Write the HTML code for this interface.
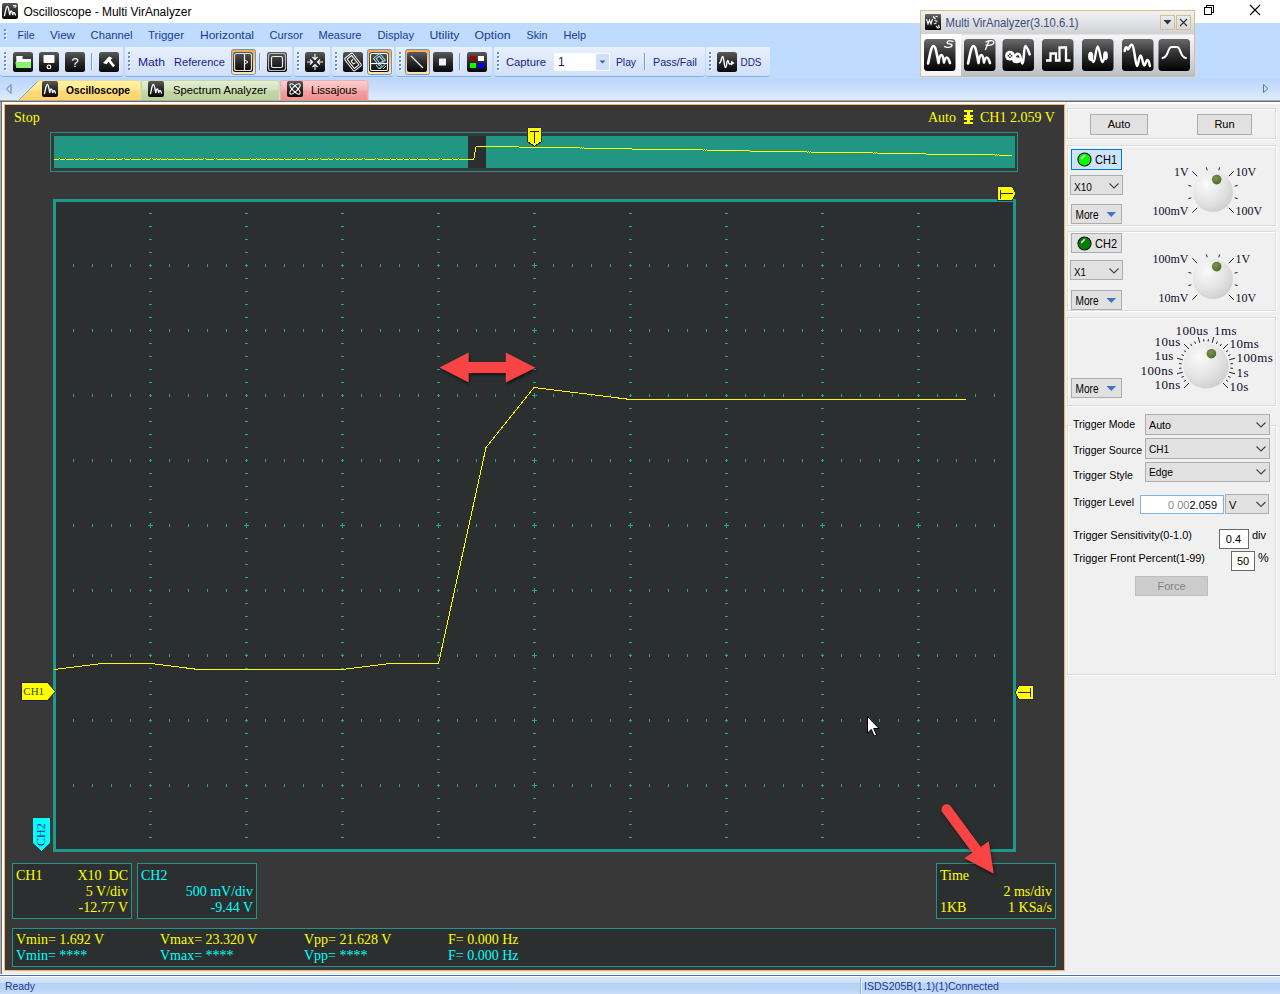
<!DOCTYPE html>
<html><head><meta charset="utf-8"><title>Oscilloscope - Multi VirAnalyzer</title>
<style>
html,body{margin:0;padding:0}
body{width:1280px;height:994px;position:relative;overflow:hidden;background:#fff;font-family:"Liberation Sans",sans-serif;font-size:12px;color:#000}
.a{position:absolute}
svg{position:absolute;left:0;top:0;overflow:visible}
svg text{white-space:pre}
.band{position:absolute;top:47px;height:30px;background:linear-gradient(#e8f0fd,#dce8fb 50%,#cfe0f9);border-bottom:1px solid #84aee3;border-radius:0 0 3px 3px;box-sizing:border-box}
.gb{position:absolute;left:1067px;width:209px;border:1px solid #dcdcdc;box-sizing:border-box;box-shadow:1px 1px 0 #fff, inset 1px 1px 0 #fff}
.btn{position:absolute;box-sizing:border-box;background:#e1e1e1;border:1px solid #adadad;font-size:11px;text-align:center;line-height:19px;color:#000}
/*SECTION-CSS*/
</style></head><body>
<div class="a" style="left:0;top:0;width:1280px;height:23px;background:#fff"></div>
<div class="a" style="left:0;top:23px;width:1280px;height:24px;background:#bfdbff"></div>
<div class="a" style="left:0;top:47px;width:1280px;height:31px;background:#bfdbff"></div>
<div class="a" style="left:0;top:78px;width:1280px;height:22px;background:linear-gradient(#bbd6fb,#cbdffb 50%,#e1ecfc)"></div>
<!-- toolbar bands -->
<div class="band" style="left:0;width:123px"></div>
<div class="band" style="left:125px;width:167px"></div>
<div class="band" style="left:294px;width:36px"></div>
<div class="band" style="left:332px;width:62px"></div>
<div class="band" style="left:396px;width:96px"></div>
<div class="band" style="left:494px;width:211px"></div>
<div class="band" style="left:706px;width:64px"></div>
<!-- tabs -->
<svg width="1280" height="994" viewBox="0 0 1280 994">
<defs>
<linearGradient id="ty" x1="0" y1="0" x2="0" y2="1"><stop offset="0" stop-color="#fff4a3"/><stop offset=".45" stop-color="#ffe88c"/><stop offset=".55" stop-color="#ffd978"/><stop offset="1" stop-color="#ffd36b"/></linearGradient>
<linearGradient id="tg" x1="0" y1="0" x2="0" y2="1"><stop offset="0" stop-color="#e6efd4"/><stop offset=".45" stop-color="#d3e3bb"/><stop offset=".55" stop-color="#c2d8a6"/><stop offset="1" stop-color="#b9d19c"/></linearGradient>
<linearGradient id="tp" x1="0" y1="0" x2="0" y2="1"><stop offset="0" stop-color="#fbd0d0"/><stop offset=".45" stop-color="#f7b4b4"/><stop offset=".55" stop-color="#f3a0a0"/><stop offset="1" stop-color="#ee8f8f"/></linearGradient>
<linearGradient id="ic" x1="0" y1="0" x2="0" y2="1"><stop offset="0" stop-color="#5a5a5a"/><stop offset=".5" stop-color="#2a2a2a"/><stop offset="1" stop-color="#080808"/></linearGradient>
<g id="wv"><rect width="16" height="16" rx="2" fill="url(#ic)"/><path d="M2.5 12.5c1-4 1.5-9 2.8-9s1.700 5 2.500 8.500c.3-2.500.8-4 1.500-4s1 2 1.400 4c.3-1.500.7-2.500 1.300-2.500s1 1 1.500 2.500" stroke="#fff" stroke-width="1.300" fill="none" stroke-linecap="round"/></g>
</defs>
<path d="M18.500 100.500L37.500 81.500Q38.500 80.500 40 80.500H138.500Q140.500 80.500 140.500 82.500V100.500z" fill="url(#ty)" stroke="#e8d9a0" stroke-width="1"/>
<path d="M141.500 100.500V82.500Q141.500 80.500 143.500 80.500H277Q279 80.500 279 82.500V100.500z" fill="url(#tg)" stroke="#c5d6b0" stroke-width="1"/>
<path d="M280.500 100.500V82.500Q280.500 80.500 282.500 80.500H366Q368 80.500 368 82.500V100.500z" fill="url(#tp)" stroke="#e8b0b0" stroke-width="1"/>
<path d="M18.500 100.500L37.500 81.500" stroke="#7da2ce" stroke-width="1" fill="none"/>
<use href="#wv" x="42" y="81"/>
<use href="#wv" x="148" y="81"/>
<g transform="translate(287,81)"><rect width="16" height="16" rx="2" fill="url(#ic)"/><ellipse cx="8" cy="8" rx="6.800" ry="2.400" transform="rotate(45 8 8)" fill="none" stroke="#fff" stroke-width="1.100"/><ellipse cx="8" cy="8" rx="6.800" ry="2.400" transform="rotate(-45 8 8)" fill="none" stroke="#fff" stroke-width="1.100"/></g>
<path d="M11 84.500v9l-4.500-4.500z" fill="none" stroke="#4f7fc0" stroke-width="1"/>
<path d="M1263.500 84.500v8l4.500-4z" fill="none" stroke="#4f7fc0" stroke-width="1"/>
<g font-family="Liberation Sans" font-size="11.3">
<text x="66" y="94" font-weight="bold" fill="#000" textLength="64" lengthAdjust="spacingAndGlyphs">Oscilloscope</text>
<text x="173" y="94" fill="#000" textLength="94" lengthAdjust="spacingAndGlyphs">Spectrum Analyzer</text>
<text x="311" y="94" fill="#000" textLength="46" lengthAdjust="spacingAndGlyphs">Lissajous</text>
</g>
<!-- title -->
<use href="#wv" x="2" y="3"/>
<path d="M13 5.500h3v1.500h-2.500" stroke="#fff" stroke-width="1" fill="none"/>
<text x="23.500" y="16" font-family="Liberation Sans" font-size="12.500" fill="#000" textLength="168" lengthAdjust="spacingAndGlyphs">Oscilloscope - Multi VirAnalyzer</text>
<path d="M1204.500 7.500h7v7h-7zM1206.500 7.500v-2h7v7h-2" stroke="#000" stroke-width="1" fill="none" shape-rendering="crispEdges"/>
<path d="M1250 5l10 10M1260 5l-10 10" stroke="#000" stroke-width="1.100" fill="none"/>
<!-- menu -->
<g font-family="Liberation Sans" font-size="11.3" fill="#1b3a94">
<text x="17.500" y="39" textLength="17" lengthAdjust="spacingAndGlyphs">File</text>
<text x="50" y="39" textLength="25" lengthAdjust="spacingAndGlyphs">View</text>
<text x="90.500" y="39" textLength="42" lengthAdjust="spacingAndGlyphs">Channel</text>
<text x="148" y="39" textLength="36" lengthAdjust="spacingAndGlyphs">Trigger</text>
<text x="200" y="39" textLength="54" lengthAdjust="spacingAndGlyphs">Horizontal</text>
<text x="269.500" y="39" textLength="33.500" lengthAdjust="spacingAndGlyphs">Cursor</text>
<text x="318.500" y="39" textLength="43" lengthAdjust="spacingAndGlyphs">Measure</text>
<text x="377.500" y="39" textLength="36.500" lengthAdjust="spacingAndGlyphs">Display</text>
<text x="429.500" y="39" textLength="30" lengthAdjust="spacingAndGlyphs">Utility</text>
<text x="474.500" y="39" textLength="36" lengthAdjust="spacingAndGlyphs">Option</text>
<text x="526.500" y="39" textLength="21" lengthAdjust="spacingAndGlyphs">Skin</text>
<text x="563.500" y="39" textLength="22.500" lengthAdjust="spacingAndGlyphs">Help</text>
<text x="138" y="66" fill="#1a1a8c" textLength="27" lengthAdjust="spacingAndGlyphs">Math</text>
<text x="174" y="66" fill="#1a1a8c" textLength="51" lengthAdjust="spacingAndGlyphs">Reference</text>
<text x="506" y="66" fill="#1a1a8c" textLength="40" lengthAdjust="spacingAndGlyphs">Capture</text>
<text x="616" y="66" fill="#1a1a8c" textLength="20" lengthAdjust="spacingAndGlyphs">Play</text>
<text x="653" y="66" fill="#1a1a8c" textLength="44" lengthAdjust="spacingAndGlyphs">Pass/Fail</text>
<text x="740.500" y="66" fill="#1a1a8c" textLength="21" lengthAdjust="spacingAndGlyphs">DDS</text>
</g>
<defs>
<g id="ib"><rect width="20" height="20" rx="2.500" fill="url(#ic)"/></g>
<linearGradient id="pr" x1="0" y1="0" x2="0" y2="1"><stop offset="0" stop-color="#f6a94a"/><stop offset=".35" stop-color="#f9c068"/><stop offset="1" stop-color="#fde7b0"/></linearGradient>
<g id="grip" shape-rendering="crispEdges"><path d="M1 1h2v2h-2zM1 5h2v2h-2zM1 9h2v2h-2zM1 13h2v2h-2zM1 17h2v2h-2z" fill="#fff"/><path d="M0 0h2v2h-2zM0 4h2v2h-2zM0 8h2v2h-2zM0 12h2v2h-2zM0 16h2v2h-2z" fill="#5a8fe0"/></g>
</defs>
<!-- menu grip -->
<g shape-rendering="crispEdges"><path d="M5 30h2v2h-2zM5 34h2v2h-2zM5 38h2v2h-2z" fill="#fff"/><path d="M4 29h2v2h-2zM4 33h2v2h-2zM4 37h2v2h-2z" fill="#5a8fe0"/></g>
<use href="#grip" x="4" y="52"/><use href="#grip" x="128" y="52"/><use href="#grip" x="297" y="52"/><use href="#grip" x="335" y="52"/><use href="#grip" x="399" y="52"/><use href="#grip" x="497" y="52"/><use href="#grip" x="709" y="52"/>
<!-- separators -->
<path d="M91.500 53v17M259.500 53v17M459.500 53v17M644.500 53v17" stroke="#6f9de0" stroke-width="1" shape-rendering="crispEdges"/>
<path d="M92.500 53v17M260.500 53v17M460.500 53v17M645.500 53v17" stroke="#eef4fd" stroke-width="1" shape-rendering="crispEdges"/>
<!-- pressed backgrounds -->
<g stroke="#6a93d6" stroke-width="1"><rect x="231.500" y="49.500" width="24" height="25" rx="2" fill="url(#pr)"/><rect x="367.500" y="49.500" width="24" height="25" rx="2" fill="url(#pr)"/><rect x="405.500" y="49.500" width="24" height="25" rx="2" fill="url(#pr)"/></g>
<!-- 1 open -->
<use href="#ib" x="13" y="52"/><path d="M16.300 56h6.300v3h8.400v4h-14.700z" fill="#fff"/><path d="M15.400 62h15.600v6h-14.800z" fill="#86f26e"/>
<!-- 2 save -->
<use href="#ib" x="39" y="52"/><rect x="43.500" y="55" width="11" height="8" rx="1" fill="#fff"/><circle cx="48.900" cy="66.900" r="1.800" fill="none" stroke="#fff" stroke-width="1.200"/>
<!-- 3 help -->
<use href="#ib" x="65" y="52"/><text x="75" y="67" font-family="Liberation Sans" font-size="13" fill="#fff" text-anchor="middle">?</text>
<!-- 4 hammer -->
<use href="#ib" x="99" y="52"/><path d="M103 63l6-6.500 3.500 1.500-2 2 4.500 5.500-2 1.800-4.500-5.500-2 2.500z" fill="#fff"/>
<!-- 5 split -->
<use href="#ib" x="233" y="52"/><rect x="234.500" y="53.500" width="17" height="17" rx="2" fill="none" stroke="#ddd" stroke-width="1.200"/><path d="M244.500 54v16" stroke="#eee" stroke-width="1.200"/><path d="M245 60l3 2-3 2" stroke="#fff" fill="none" stroke-width="1"/>
<!-- 6 square -->
<use href="#ib" x="267" y="52"/><rect x="268.500" y="53.500" width="17" height="17" rx="2.500" fill="none" stroke="#bbb" stroke-width="1.200"/><rect x="271.500" y="56.500" width="11" height="11" rx="1.500" fill="none" stroke="#e8e8e8" stroke-width="1.200"/>
<!-- 7 converge -->
<use href="#ib" x="305" y="52"/><path d="M315 54v5.500M315 70v-5.500M307 62h5.500M323 62h-5.500M312.500 57l2.500 2.500 2.500-2.500M312.500 67l2.500-2.500 2.500 2.500M310 59.500l2.500 2.500-2.500 2.500M320 59.500l-2.500 2.500 2.500 2.500" stroke="#fff" stroke-width="1.100" fill="none"/>
<!-- 8 card -->
<use href="#ib" x="343" y="52"/><g transform="rotate(-38 353 62)" fill="none" stroke="#fff" stroke-width="1"><rect x="348" y="54" width="10" height="16" rx="1.500"/><rect x="350" y="56" width="6" height="12" rx=".5"/><path d="M352 60h2.500M352 64h2.500M352 60v4"/></g>
<!-- 9 card+image -->
<use href="#ib" x="369" y="52" /><rect x="370.500" y="53.500" width="17" height="17" rx="1.500" fill="none" stroke="#fff" stroke-width="1.200"/><path d="M371 63.500h16" stroke="#fff" stroke-width="1.200"/><g transform="rotate(-40 379 59)" fill="none" stroke="#a8e0f0" stroke-width="1"><rect x="375" y="55" width="8" height="9"/><rect x="377" y="57" width="4" height="6"/></g><path d="M376 65l3 4 3-4M380 69l5-4.500M383 69l3-3" stroke="#a8e0f0" stroke-width="1" fill="none"/>
<!-- 10 line -->
<use href="#ib" x="407" y="52"/><path d="M411 56l12 12" stroke="#eee" stroke-width="1.300"/>
<!-- 11 stop -->
<use href="#ib" x="433" y="52"/><rect x="439" y="58.500" width="7" height="7" rx=".5" fill="#f4f4f4"/>
<!-- 12 colours -->
<use href="#ib" x="467" y="52"/><g shape-rendering="crispEdges"><rect x="470" y="56" width="6" height="5" fill="#a00000"/><rect x="478" y="56" width="6" height="5" fill="#fff"/><rect x="470" y="63" width="6" height="5" fill="#0f0"/><rect x="478" y="63" width="6" height="5" fill="#00f"/></g>
<!-- 13 dds -->
<use href="#ib" x="717" y="52"/><path d="M719.500 63c1.500 0 2-6.500 3.200-6.500s1.500 11 2.800 11 1.200-7 2.200-7 .8 3.500 1.800 3.500h1.500" stroke="#fff" stroke-width="1.400" fill="none" stroke-linecap="round"/><path d="M731 60.500l3.500 2.500-3.500 2.500z" fill="#fff"/>
<!-- combo -->
<rect x="554" y="53" width="56" height="18" fill="#fff"/><rect x="596" y="54" width="13" height="16" fill="#cfe0f7"/><path d="M599.500 60.500h6l-3 3z" fill="#3a5ea0"/><text x="558" y="66" font-family="Liberation Sans" font-size="12" fill="#1a1a5c">1</text>

</svg>

<!--MAIN-->
<div class="a" id="frame" style="left:0;top:100px;width:1280px;height:874px;background:#f0f0f0"></div>
<div class="a" style="left:0;top:100px;width:1280px;height:1px;background:#a9a9a6"></div><div class="a" style="left:0;top:101px;width:1280px;height:1px;background:#6b6b68"></div><div class="a" style="left:0;top:102px;width:1px;height:872px;background:#b0aeac"></div><div class="a" style="left:1px;top:102px;width:1px;height:872px;background:#6e6c6a"></div>
<div class="a" style="left:2px;top:102px;width:1278px;height:2px;background:#fff"></div><div class="a" style="left:2px;top:102px;width:1065px;height:871px;background:#fff"></div>
<div class="a" style="left:4px;top:104px;width:1061px;height:867px;background:#ffb060"></div>
<div class="a" id="scope" style="left:5px;top:105px;width:1059px;height:865px;background:#383838"></div>
<svg width="1280" height="994" viewBox="0 0 1280 994" id="scopesvg">
<defs>
<path id="gr" d="M73.5 -1v3M92.5 -1v3M111.5 -1v3M130.5 -1v3M150.5 -1v3M169.5 -1v3M188.5 -1v3M207.5 -1v3M226.5 -1v3M246.5 -1v3M265.5 -1v3M284.5 -1v3M303.5 -1v3M322.5 -1v3M342.5 -1v3M361.5 -1v3M380.5 -1v3M399.5 -1v3M418.5 -1v3M438.5 -1v3M457.5 -1v3M476.5 -1v3M495.5 -1v3M514.5 -1v3M534.5 -1v3M553.5 -1v3M572.5 -1v3M591.5 -1v3M610.5 -1v3M630.5 -1v3M649.5 -1v3M668.5 -1v3M687.5 -1v3M706.5 -1v3M726.5 -1v3M745.5 -1v3M764.5 -1v3M783.5 -1v3M802.5 -1v3M822.5 -1v3M841.5 -1v3M860.5 -1v3M879.5 -1v3M898.5 -1v3M918.5 -1v3M937.5 -1v3M956.5 -1v3M975.5 -1v3M994.5 -1v3" stroke="#22a885" stroke-width="1" fill="none" shape-rendering="crispEdges"/>
<path id="gc" d="M-1 13.5h3M-1 26.5h3M-1 39.5h3M-1 52.5h3M-1 65.5h3M-1 78.5h3M-1 91.5h3M-1 104.5h3M-1 117.5h3M-1 130.5h3M-1 143.5h3M-1 156.5h3M-1 169.5h3M-1 182.5h3M-1 195.5h3M-1 208.5h3M-1 221.5h3M-1 234.5h3M-1 247.5h3M-1 260.5h3M-1 273.5h3M-1 286.5h3M-1 299.5h3M-1 312.5h3M-1 325.5h3M-1 338.5h3M-1 351.5h3M-1 364.5h3M-1 377.5h3M-1 390.5h3M-1 403.5h3M-1 416.5h3M-1 429.5h3M-1 442.5h3M-1 455.5h3M-1 468.5h3M-1 481.5h3M-1 494.5h3M-1 507.5h3M-1 520.5h3M-1 533.5h3M-1 546.5h3M-1 559.5h3M-1 572.5h3M-1 585.5h3M-1 598.5h3M-1 611.5h3M-1 624.5h3M-1 637.5h3" stroke="#22a885" stroke-width="1" fill="none" shape-rendering="crispEdges"/>
</defs>
<!-- overview -->
<rect x="50.5" y="132.5" width="967" height="39" fill="none" stroke="#1f9686" shape-rendering="crispEdges"/>
<rect x="54" y="136" width="961" height="32" fill="#219683"/>
<rect x="468" y="136" width="18" height="32" fill="#2b2f30"/>
<path d="M54 159.5H59m0 -1h1m0 1M60 159.5H65m0 -1h1m0 1M66 159.5H74m0 -1h1m0 1M75 159.5H79m0 -1h1m0 1M80 159.5H88m0 -1h1m0 1M89 159.5H94m0 -1h1m0 1m1 0m0 -1h1m0 1M97 159.5H105m0 -1h1m0 1M106 159.5H116m0 -1h1m0 1M117 159.5H122m0 -1h1m0 1m1 0m0 -1h1m0 1M125 159.5H130m0 -1h1m0 1M131 159.5H141m0 -1h1m0 1M142 159.5H145m0 -1h1m0 1M146 159.5H150m0 -1h1m0 1m1 0m0 -1h1m0 1M153 159.5H156m0 -1h1m0 1M157 159.5H160m0 -1h1m0 1M161 159.5H167m0 -1h1m0 1M168 159.5H175m0 -1h1m0 1M176 159.5H183m0 -1h1m0 1M184 159.5H192m0 -1h1m0 1M193 159.5H198m0 -1h1m0 1M199 159.5H203m0 -1h1m0 1m1 0m0 -1h1m0 1M206 159.5H214m0 -1h1m0 1m1 0m0 -1h1m0 1M217 159.5H224m0 -1h1m0 1M225 159.5H231m0 -1h1m0 1M232 159.5H239m0 -1h1m0 1M240 159.5H250m0 -1h1m0 1M251 159.5H256m0 -1h1m0 1M257 159.5H260m0 -1h1m0 1M261 159.5H266m0 -1h1m0 1M267 159.5H273m0 -1h1m0 1M274 159.5H278m0 -1h1m0 1M279 159.5H284m0 -1h1m0 1M285 159.5H291m0 -1h1m0 1M292 159.5H296m0 -1h1m0 1M297 159.5H305m0 -1h1m0 1m1 0m0 -1h1m0 1M308 159.5H312m0 -1h1m0 1M313 159.5H318m0 -1h1m0 1m1 0m0 -1h1m0 1M321 159.5H328m0 -1h1m0 1M329 159.5H333m0 -1h1m0 1m1 0m0 -1h1m0 1M336 159.5H339m0 -1h1m0 1M340 159.5H346m0 -1h1m0 1M347 159.5H353m0 -1h1m0 1M354 159.5H357m0 -1h1m0 1M358 159.5H362m0 -1h1m0 1m1 0m0 -1h1m0 1M365 159.5H375m0 -1h1m0 1m1 0m0 -1h1m0 1M378 159.5H383m0 -1h1m0 1M384 159.5H390m0 -1h1m0 1M391 159.5H396m0 -1h1m0 1M397 159.5H403m0 -1h1m0 1M404 159.5H409m0 -1h1m0 1M410 159.5H417m0 -1h1m0 1M418 159.5H428m0 -1h1m0 1M429 159.5H439m0 -1h1m0 1m1 0m0 -1h1m0 1M442 159.5H452m0 -1h1m0 1M453 159.5H458m0 -1h1m0 1M459 159.5H466H473L474.5 157L475.5 148L476.5 146.5H486H519M519 147.5H579M579 148.5m0 -1h1m0 1h1m0 -1h1m0 1h1m0 -1h1m0 1H632M632 149.5H702M702 150.5m0 -1h1m0 1h1m0 -1h1m0 1h1m0 -1h1m0 1H750M750 151.5H806M806 152.5m0 -1h1m0 1h1m0 -1h1m0 1h1m0 -1h1m0 1H872M872 153.5m0 -1h1m0 1h1m0 -1h1m0 1h1m0 -1h1m0 1H926M926 154.5H994M994 155.5m0 -1h1m0 1h1m0 -1h1m0 1h1m0 -1h1m0 1H1012" stroke="#ff0" stroke-width="1" fill="none" shape-rendering="crispEdges"/>
<!-- plot -->
<rect x="54.5" y="200.5" width="960" height="650" fill="#2b2f30" stroke="#1f9a88" stroke-width="3" shape-rendering="crispEdges"/>
<g id="grid">
<use href="#gr" y="265"/><use href="#gr" y="330"/><use href="#gr" y="395"/><use href="#gr" y="460"/><use href="#gr" y="525"/><use href="#gr" y="590"/><use href="#gr" y="655"/><use href="#gr" y="720"/><use href="#gr" y="785"/><use href="#gc" x="150" y="200"/><use href="#gc" x="246" y="200"/><use href="#gc" x="342" y="200"/><use href="#gc" x="438" y="200"/><use href="#gc" x="534" y="200"/><use href="#gc" x="630" y="200"/><use href="#gc" x="726" y="200"/><use href="#gc" x="822" y="200"/><use href="#gc" x="918" y="200"/><path d="M148 525.5h5M150.5 523v5M532 265.5h5M534.5 263v5M244 525.5h5M246.5 523v5M532 330.5h5M534.5 328v5M340 525.5h5M342.5 523v5M532 395.5h5M534.5 393v5M436 525.5h5M438.5 523v5M532 460.5h5M534.5 458v5M532 525.5h5M534.5 523v5M532 525.5h5M534.5 523v5M628 525.5h5M630.5 523v5M532 590.5h5M534.5 588v5M724 525.5h5M726.5 523v5M532 655.5h5M534.5 653v5M820 525.5h5M822.5 523v5M532 720.5h5M534.5 718v5M916 525.5h5M918.5 523v5M532 785.5h5M534.5 783v5" stroke="#22a885" fill="none" shape-rendering="crispEdges"/>
</g>
<polyline points="54.5,669.5 102.5,663.5 150.5,663.5 198.5,669.5 246.5,669.5 294.5,669.5 342.5,669.5 390.5,663.5 438.5,663.5 486.0,447.5 534.0,387.5 582.5,393.5 630.5,399.5 965.5,399.5" stroke="#ff0" stroke-width="1" fill="none" shape-rendering="crispEdges"/>

<g stroke="#2a2a52" stroke-width="1" shape-rendering="crispEdges">
<polygon points="527.5,127.5 541.5,127.5 541.5,141.5 534.5,146.5 527.5,141.5" fill="#ff0"/>
<path d="M530 131.5h9M534.5 131v12" fill="none" stroke="#222"/>
<polygon points="997.5,186.5 1012.5,186.5 1015.5,193.5 1012.5,200.5 997.5,200.5" fill="#ff0"/>
<path d="M1000.5 190v9M1000 193.5h13" fill="none"/>
<polygon points="1015.5,692.5 1018.5,685.5 1033.5,685.5 1033.5,699.5 1018.5,699.5" fill="#ff0"/>
<path d="M1030.5 688v9M1018 692.5h13" fill="none"/>
</g>
<polygon points="21.5,682.5 47.5,682.5 55.5,691.5 47.5,700.5 21.5,700.5" fill="#ff0" stroke="#1c1c50"/>
<text x="23.3" y="695" font-family="Liberation Serif" font-size="11" fill="#3a4a20">CH1</text>
<polygon points="32.5,817.5 50.5,817.5 50.5,843 41.5,851.5 32.5,843" fill="#0ff" stroke="#3a3030" stroke-width="1"/>
<text transform="translate(44.8,846) rotate(-90)" font-family="Liberation Serif" font-size="12" fill="#2030a0" stroke="none">CH2</text>


<g fill="#2b2f30" stroke="#1f9686" shape-rendering="crispEdges">
<rect x="12.5" y="863.5" width="119" height="55"/>
<rect x="137.5" y="863.5" width="119" height="55"/>
<rect x="936.5" y="863.5" width="119" height="55"/>
<rect x="12.5" y="928.5" width="1043" height="38"/>
</g>
<g font-family="Liberation Serif" font-size="14" fill="#ff0">
<text x="14" y="122">Stop</text>
<text x="928" y="122">Auto</text>
<text x="980" y="122">CH1 2.059 V</text>
<text x="16" y="880">CH1</text>
<text x="128" y="880" text-anchor="end">X10  DC</text>
<text x="128" y="896" text-anchor="end">5 V/div</text>
<text x="128" y="912" text-anchor="end">-12.77 V</text>
<text x="940" y="880">Time</text>
<text x="1052" y="896" text-anchor="end">2 ms/div</text>
<text x="940" y="912">1KB</text>
<text x="1052" y="912" text-anchor="end">1 KSa/s</text>
<text x="16" y="943.6">Vmin= 1.692 V</text>
<text x="160" y="943.6">Vmax= 23.320 V</text>
<text x="304" y="943.6">Vpp= 21.628 V</text>
<text x="448" y="943.6">F= 0.000 Hz</text>
</g>
<g font-family="Liberation Serif" font-size="14" fill="#0ff">
<text x="141" y="880">CH2</text>
<text x="253" y="896" text-anchor="end">500 mV/div</text>
<text x="253" y="912" text-anchor="end">-9.44 V</text>
<text x="16" y="959.6">Vmin= ****</text>
<text x="160" y="959.6">Vmax= ****</text>
<text x="304" y="959.6">Vpp= ****</text>
<text x="448" y="959.6">F= 0.000 Hz</text>
</g>
<path d="M964 110h9v2h-9zM964 115h9v2h-9zM964 118h9v2h-9zM964 122h9v2h-9zM967 110h3v14h-3zM966 116h5v3h-5z" fill="#ff0" shape-rendering="crispEdges"/>


<g fill="#f84444" filter="drop-shadow(1px 2px 1.5px rgba(0,0,0,.55))">
<polygon points="439.5,367.5 468.7,352.5 468.7,362 505.8,362 505.8,352.5 535.5,367.7 505.8,382.5 505.8,373 468.7,373 468.7,382.5"/>
<path d="M946.7 809.5L977 850.5" stroke="#f84444" stroke-width="10.5" stroke-linecap="round" fill="none"/>
<polygon points="993.8,873.7 988.8,841.2 964.4,858.3"/>
</g>
<path d="M867.5 716.5v16.5l3.8-3.6 2.9 6.6 2.4-1 -2.9-6.5h5.3z" fill="#fff" stroke="#000" stroke-width="1" stroke-linejoin="miter"/>

</svg>

<div class="a" style="left:1065px;top:104px;width:215px;height:870px;background:#f0f0f0"></div>
<div class="a" style="left:1065px;top:102px;width:2px;height:871px;background:#eef1f8"></div>
<div class="gb" style="top:108px;height:31px"></div>
<div class="gb" style="top:145px;height:81px"></div>
<div class="gb" style="top:231px;height:80px"></div>
<div class="gb" style="top:317px;height:89px"></div>
<div class="gb" style="top:425px;height:250px"></div>
<div class="a" style="left:1071px;top:419px;width:76px;height:13px;background:#f0f0f0"></div><div class="btn" style="left:1090px;top:114px;width:58px;height:21px">Auto</div>
<div class="btn" style="left:1197px;top:114px;width:55px;height:21px">Run</div>
<div class="btn" style="left:1071px;top:149px;width:51px;height:21px;background:#cce4f7;border-color:#0078d7"></div>
<div class="btn" style="left:1071px;top:233px;width:51px;height:20px"></div>
<div class="btn" style="left:1070px;top:175px;width:53px;height:20px"></div>
<div class="btn" style="left:1070px;top:260px;width:53px;height:20px"></div>
<div class="btn" style="left:1071px;top:204px;width:51px;height:20px"></div>
<div class="btn" style="left:1071px;top:290px;width:51px;height:20px"></div>
<div class="btn" style="left:1071px;top:378px;width:51px;height:20px"></div>
<div class="btn" style="left:1145px;top:414px;width:125px;height:21px"></div>
<div class="btn" style="left:1145px;top:438px;width:125px;height:21px"></div>
<div class="btn" style="left:1145px;top:462px;width:125px;height:20px"></div>
<div class="btn" style="left:1225px;top:494px;width:44px;height:20px"></div>
<div class="a" style="left:1140px;top:495px;width:84px;height:19px;background:#fff;border:1px solid #7eb4ea;box-sizing:border-box"></div>
<div class="a" style="left:1219px;top:529px;width:30px;height:20px;background:#fff;border:1px solid #6a6a6a;box-sizing:border-box"></div>
<div class="a" style="left:1231px;top:551px;width:24px;height:20px;background:#fff;border:1px solid #6a6a6a;box-sizing:border-box"></div>
<div class="btn" style="left:1135px;top:576px;width:73px;height:20px;background:#ccc;border-color:#bfbfbf;color:#838383">Force</div>
<svg width="1280" height="994" viewBox="0 0 1280 994">
<defs>
<radialGradient id="kg" cx=".35" cy=".3" r=".9"><stop offset="0" stop-color="#fafafa"/><stop offset=".5" stop-color="#e4e4e4"/><stop offset="1" stop-color="#c4c4c4"/></radialGradient>
<radialGradient id="kd" cx=".4" cy=".35" r=".7"><stop offset="0" stop-color="#7a9448"/><stop offset="1" stop-color="#4d6a28"/></radialGradient>
<radialGradient id="lg" cx=".4" cy=".35" r=".7"><stop offset="0" stop-color="#6aff6a"/><stop offset="1" stop-color="#00e800"/></radialGradient>
</defs>
<circle cx="1213" cy="192" r="20" fill="url(#kg)"/><circle cx="1216.7" cy="179.6" r="4.8" fill="url(#kd)"/><path d="M1197.2 207.8L1192.3 212.7M1197.2 176.2L1192.3 171.3M1228.8 176.2L1233.7 171.3M1228.8 207.8L1233.7 212.7M1191.3 197.8L1188.4 198.6M1191.3 186.2L1188.4 185.4M1207.2 170.3L1206.4 167.4M1218.8 170.3L1219.6 167.4M1234.7 186.2L1237.6 185.4M1234.7 197.8L1237.6 198.6" stroke="#222" stroke-width="1" fill="none"/><circle cx="1213" cy="279" r="20" fill="url(#kg)"/><circle cx="1216.7" cy="266.6" r="4.8" fill="url(#kd)"/><path d="M1197.2 294.8L1192.3 299.7M1197.2 263.2L1192.3 258.3M1228.8 263.2L1233.7 258.3M1228.8 294.8L1233.7 299.7M1191.3 284.8L1188.4 285.6M1191.3 273.2L1188.4 272.4M1207.2 257.3L1206.4 254.4M1218.8 257.3L1219.6 254.4M1234.7 273.2L1237.6 272.4M1234.7 284.8L1237.6 285.6" stroke="#222" stroke-width="1" fill="none"/><circle cx="1206" cy="366" r="22.5" fill="url(#kg)"/><circle cx="1211.4" cy="353.7" r="4.8" fill="url(#kd)"/><path d="M1189.0 383.0L1184.1 387.9M1185.9 380.1L1183.9 381.5M1183.8 376.4L1181.5 377.4M1182.8 372.2L1177.0 373.8M1181.6 368.1L1179.1 368.4M1181.6 363.9L1179.1 363.6M1182.8 359.8L1177.0 358.2M1183.8 355.6L1181.5 354.6M1185.9 351.9L1183.9 350.5M1189.0 349.0L1184.1 344.1M1191.9 345.9L1190.5 343.9M1195.6 343.8L1194.6 341.5M1199.8 342.8L1198.2 337.0M1203.9 341.6L1203.6 339.1M1208.1 341.6L1208.4 339.1M1212.2 342.8L1213.8 337.0M1216.4 343.8L1217.4 341.5M1220.1 345.9L1221.5 343.9M1223.0 349.0L1227.9 344.1M1226.1 351.9L1228.1 350.5M1228.2 355.6L1230.5 354.6M1229.2 359.8L1235.0 358.2M1230.4 363.9L1232.9 363.6M1230.4 368.1L1232.9 368.4M1229.2 372.2L1235.0 373.8M1228.2 376.4L1230.5 377.4M1226.1 380.1L1228.1 381.5M1223.0 383.0L1227.9 387.9" stroke="#222" stroke-width="1" fill="none"/>
<circle cx="1084.500" cy="159.500" r="6.500" fill="#0f0" stroke="#111" stroke-width="1.200"/><path d="M1081.500 158.500l3-3" stroke="#fff" stroke-width="1.400" stroke-linecap="round"/>
<circle cx="1084.500" cy="243.500" r="6.500" fill="#008000" stroke="#111" stroke-width="1.200"/><path d="M1081.500 242.500l3-3" stroke="#fff" stroke-width="1.400" stroke-linecap="round"/>
<g fill="none" stroke="#444" stroke-width="1.100"><path d="M1109.500 183.500l4.500 4.500 4.500-4.500M1109.500 268.500l4.500 4.500 4.500-4.500M1256.500 422.500l4.500 4.500 4.500-4.500M1256.500 446.500l4.500 4.500 4.500-4.500M1256.500 469.500l4.500 4.500 4.500-4.500M1256.500 502l4.500 4.500 4.500-4.500"/></g>
<g fill="#4472c4"><path d="M1106.500 212h9.500l-4.750 5z"/><path d="M1106.500 298h9.500l-4.750 5z"/><path d="M1106.500 386h9.500l-4.750 5z"/></g>
<g font-family="Liberation Serif" font-size="12" fill="#0c0c28">
<text x="1174" y="176">1V</text><text x="1235.500" y="176">10V</text><text x="1152.500" y="214.500">100mV</text><text x="1235.500" y="214.500">100V</text>
<text x="1152.500" y="262.500">100mV</text><text x="1235.500" y="262.500">1V</text><text x="1158.500" y="301.500">10mV</text><text x="1235.500" y="301.500">10V</text>
<g font-size="13" letter-spacing=".4"><text x="1175.500" y="334.500">100us</text><text x="1214" y="334.500">1ms</text>
<text x="1154.500" y="346">10us</text><text x="1229.500" y="347.500">10ms</text>
<text x="1154.500" y="360">1us</text><text x="1236.500" y="362">100ms</text>
<text x="1140.500" y="374.500">100ns</text><text x="1236.500" y="376.500">1s</text>
<text x="1154.500" y="388.500">10ns</text><text x="1229.500" y="390.500">10s</text></g>
</g>
<g font-family="Liberation Sans" font-size="11" fill="#000">
<text x="1095" y="164" font-size="12" textLength="22" lengthAdjust="spacingAndGlyphs">CH1</text>
<text x="1095" y="248" font-size="12" textLength="22" lengthAdjust="spacingAndGlyphs">CH2</text>
<text x="1074" y="190.500" textLength="18" lengthAdjust="spacingAndGlyphs">X10</text>
<text x="1074" y="275.500" textLength="12" lengthAdjust="spacingAndGlyphs">X1</text>
<text x="1075.500" y="219" font-size="12" textLength="23" lengthAdjust="spacingAndGlyphs">More</text>
<text x="1075.500" y="305" font-size="12" textLength="23" lengthAdjust="spacingAndGlyphs">More</text>
<text x="1075.500" y="393" font-size="12" textLength="23" lengthAdjust="spacingAndGlyphs">More</text>
<text x="1073" y="427.500" textLength="62" lengthAdjust="spacingAndGlyphs">Trigger Mode</text>
<text x="1073" y="453.500" textLength="69" lengthAdjust="spacingAndGlyphs">Trigger Source</text>
<text x="1073" y="478.500" textLength="60" lengthAdjust="spacingAndGlyphs">Trigger Style</text>
<text x="1073" y="506" textLength="61" lengthAdjust="spacingAndGlyphs">Trigger Level</text>
<text x="1073" y="539" textLength="119" lengthAdjust="spacingAndGlyphs">Trigger Sensitivity(0-1.0)</text>
<text x="1073" y="561.500" textLength="132" lengthAdjust="spacingAndGlyphs">Trigger Front Percent(1-99)</text>
<text x="1149" y="428.500" textLength="22" lengthAdjust="spacingAndGlyphs">Auto</text>
<text x="1149" y="453" textLength="20" lengthAdjust="spacingAndGlyphs">CH1</text>
<text x="1149" y="476" textLength="24" lengthAdjust="spacingAndGlyphs">Edge</text>
<text x="1229" y="509">V</text>
<text x="1252" y="538.500">div</text>
<text x="1258" y="561.500" font-size="12">%</text>
<text x="1217" y="508.500" text-anchor="end"><tspan fill="#8a8a8a">0 00</tspan>2.059</text>
<text x="1233.500" y="543" text-anchor="middle">0.4</text>
<text x="1243" y="565" text-anchor="middle">50</text>
</g>
</svg>


<div class="a" style="left:0;top:971px;width:1280px;height:3px;background:#eceef4"></div>
<div class="a" style="left:0;top:102px;width:1px;height:872px;background:#b0aeac"></div><div class="a" style="left:1px;top:102px;width:1px;height:872px;background:#6e6c6a"></div>
<div class="a" style="left:0;top:974px;width:1280px;height:1px;background:#fff"></div>
<div class="a" style="left:0;top:975px;width:1280px;height:1px;background:#4a6fae"></div>
<div class="a" style="left:0;top:976px;width:1280px;height:1px;background:#fff"></div>
<div class="a" style="left:0;top:977px;width:1280px;height:17px;background:linear-gradient(#d8e6fa 0,#cfe0f9 6px,#b5d1f6 6px,#bbd5f7 12px,#c6dcf8 17px)"></div>
<div class="a" style="left:860px;top:978px;width:1px;height:16px;background:#8db2e3"></div>
<div class="a" style="left:861px;top:978px;width:1px;height:16px;background:#e8f0fc"></div>
<svg width="1280" height="994" viewBox="0 0 1280 994"><g font-family="Liberation Sans" font-size="11.3" fill="#1b3a94">
<text x="5" y="990" textLength="30" lengthAdjust="spacingAndGlyphs">Ready</text>
<text x="864" y="990" textLength="135" lengthAdjust="spacingAndGlyphs">ISDS205B(1.1)(1)Connected</text>
</g></svg>

<div class="a" style="left:920px;top:10px;width:275px;height:67px;box-sizing:border-box;border:1px solid #d9bd8b;background:linear-gradient(#f0f1f3 0,#e6e7ea 8px,#cfd1d6 23px,#f6f6f8 24px,#e2e3e7 40px,#bcbec5 65px)"></div>
<div class="a" style="left:921px;top:34px;width:40px;height:42px;background:linear-gradient(#fff,#fdfdfd 70%,#f0f0f2)"></div>
<svg width="1280" height="994" viewBox="0 0 1280 994">
<defs>
<linearGradient id="ic2" x1="0" y1="0" x2="0" y2="1"><stop offset="0" stop-color="#6a6a6a"/><stop offset=".45" stop-color="#333"/><stop offset="1" stop-color="#000"/></linearGradient>
<g id="fb"><rect width="31.500" height="32" rx="3.500" fill="url(#ic2)"/></g>
</defs>
<rect x="925" y="14" width="16" height="16" rx="1" fill="url(#ic2)"/>
<path d="M926.500 19l1.500 5 1.500-4 1.500 4 1.500-5M933 16.500l2.500 2.500M935.500 16.500l2 0M934.500 20.500l3 1M934 24l2.500-1M936 26l2.500 2.500M938.500 25l1 3" stroke="#fff" stroke-width="1.100" fill="none"/>
<text x="945.500" y="27" font-family="Liberation Sans" font-size="12" fill="#3b4d78" textLength="133" lengthAdjust="spacingAndGlyphs">Multi VirAnalyzer(3.10.6.1)</text>
<rect x="1160.500" y="15.500" width="14" height="14" fill="none" stroke="#d9bd8b"/><path d="M1163.500 20h8l-4 4.500z" fill="#333"/>
<rect x="1176.500" y="15.500" width="14" height="14" fill="none" stroke="#d9bd8b"/><path d="M1180 19l7 7M1187 19l-7 7" stroke="#333" stroke-width="1.200"/>
<use href="#fb" x="924" y="39"/><use href="#fb" x="964" y="39"/><use href="#fb" x="1002.500" y="39"/><use href="#fb" x="1042" y="39"/><use href="#fb" x="1082" y="39"/><use href="#fb" x="1122" y="39"/><use href="#fb" x="1158.500" y="39"/>
<g stroke="#fff" fill="none" stroke-linecap="round" stroke-linejoin="round">
<!-- 1 S -->
<path d="M928 63.500c1.500-6 3-17.500 5.500-17.500s3.500 10 5 17c.5-4 1.500-8 3-8s2 4 2.500 7.500c.5-2.500 1.500-5 2.800-5s2.200 2.500 3.200 5.500" stroke-width="2.600"/>
<path d="M953 41.500c-2.500-1.200-6-.6-6 1.200s5.500 .6 5 2.800-5 2.400-7.500 1.200" stroke-width="1.300"/>
<!-- 2 P -->
<path d="M968 63.500c1.500-6 3-17.500 5.500-17.500s3.500 10 5 17c.5-4 1.500-8 3-8s2 4 2.500 7.500c.5-2.500 1.500-5 2.800-5s2.200 2.500 3.200 5.500" stroke-width="2.600"/>
<path d="M985.500 49.500l3.500-8.500M986 42c3-1.800 8-1.800 8 .4s-4.500 3.600-8 2.600" stroke-width="1.300"/>
<!-- 3 -->
<circle cx="1010" cy="55.700" r="4.900" fill="#fff" stroke="none"/><ellipse cx="1016.500" cy="60.300" rx="4.200" ry="3" fill="#fff" stroke="none"/>
<path d="M1014 58.500c1-3.500 2.500-4.800 4-4.800s2.400 2 2.900 5 1 4.700 1.800 4.700c1.300 0 1-17.300 2.600-17.300s3 4.500 4.400 8.300" stroke-width="2.500"/>
<path d="M1010 53.300v4.800M1007.600 55.700h4.800" stroke="#333" stroke-width="1.500" stroke-linecap="butt" stroke-dasharray="1.600 1.600"/>
<!-- 4 square wave -->
<path d="M1046 60.500h4.500v-7h5.500v7h3.500v-13h6.500v13h4.500" stroke-width="2.300" stroke-linejoin="miter" stroke-linecap="butt"/>
<!-- 5 modulated -->
<ellipse cx="1090.700" cy="56.300" rx="2.600" ry="4.600" fill="#fff" stroke="none"/><ellipse cx="1105.500" cy="55.700" rx="2.400" ry="4.400" fill="#fff" stroke="none"/>
<path d="M1091 58c1 2 1.800 4 2.600 4 1.600 0 2.400-15.500 4.100-15.500s3 15.500 4.700 15.500c.9 0 1.600-3 2.600-6" stroke-width="2.300"/>
<!-- 6 -->
<path d="M1124.600 51c.3-2 1-3.700 1.800-3.700s1 2.100 1.600 2.100c1 0 1.700-4.600 3.700-4.600 2.600 0 3.800 21.200 5.300 21.200s1.800-10.600 3.500-10.600 2.300 10 3.700 10 1.700-5.400 3.200-5.400 1.800 3 2.500 6" stroke-width="2.500"/>
<!-- 7 bell -->
<path d="M1162.500 58c6 0 5-11 9-11h5.500c4 0 3 11 9 11" stroke-width="2"/>
</g>
</svg>

</body></html>
